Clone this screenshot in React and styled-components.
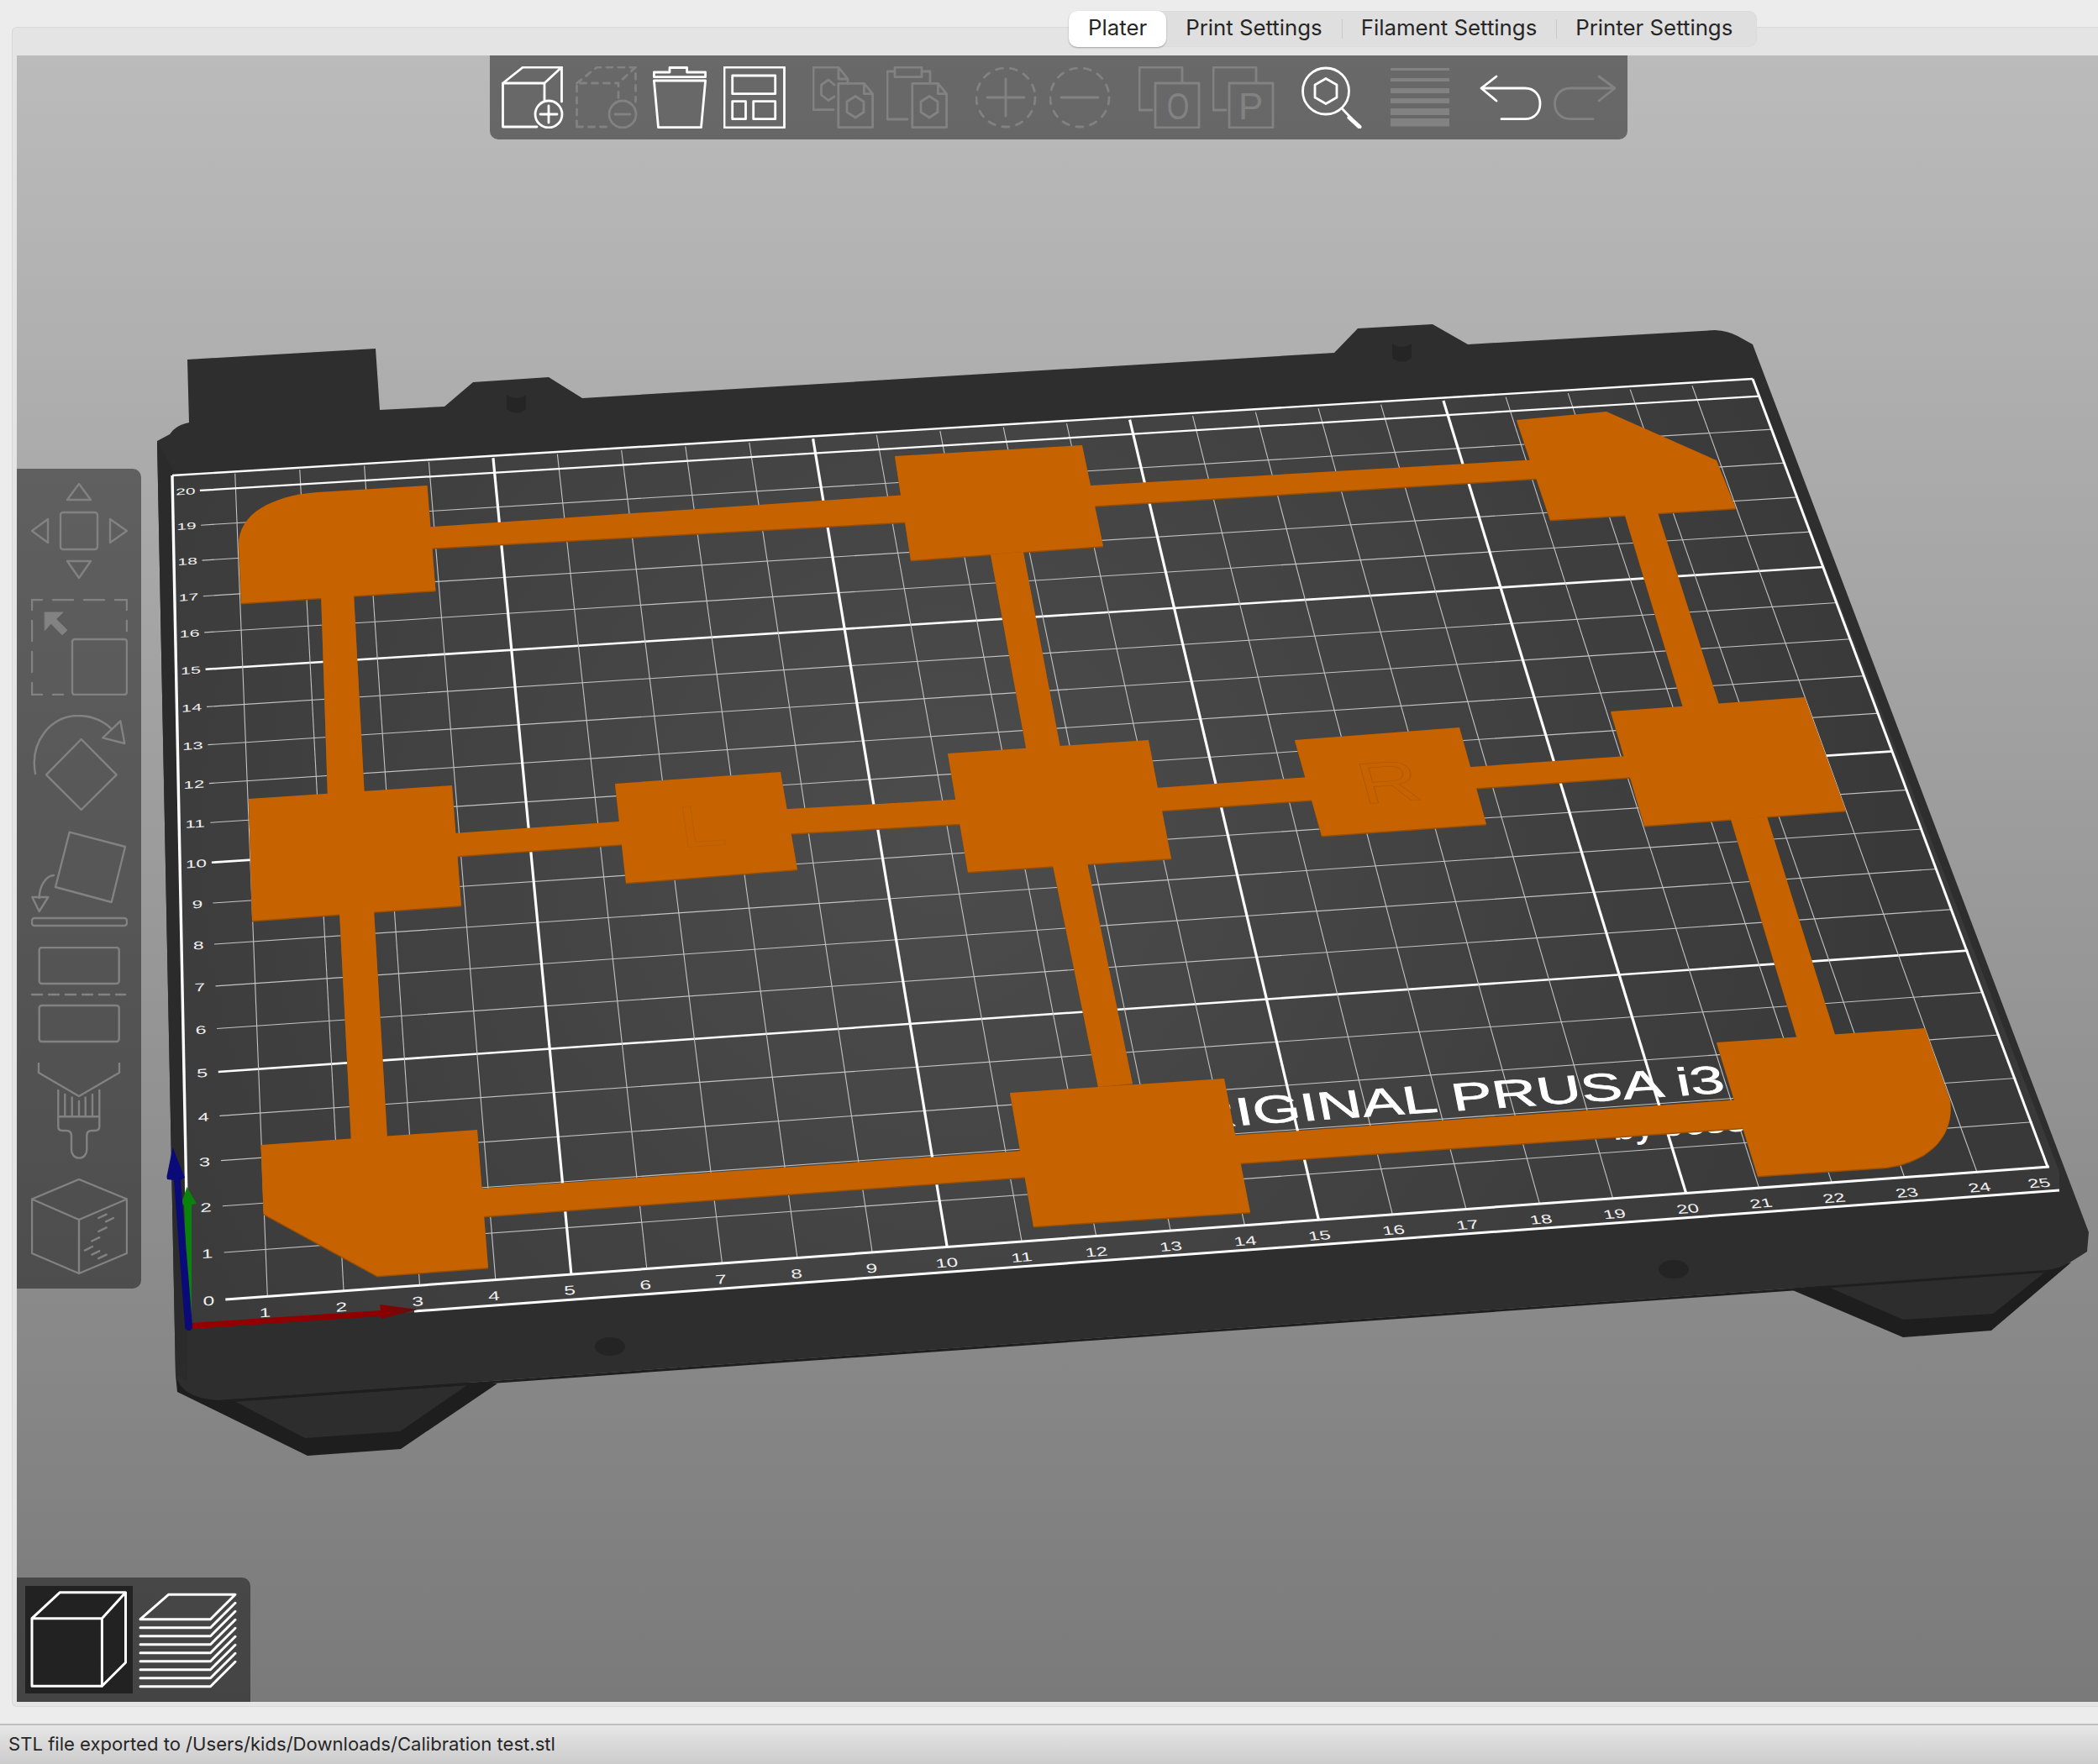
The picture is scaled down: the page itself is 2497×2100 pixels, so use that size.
import React from 'react';
import styled, { createGlobalStyle } from 'styled-components';

const GlobalStyle = createGlobalStyle`
    html, body {
        margin: 0;
        padding: 0;
        background: #ececec;
    }
    body {
        font-family: 'Inter', 'Liberation Sans', sans-serif;
    }
`;

const Window = styled.div`
    width: 2497px;
    height: 2100px;
    display: flex;
    flex-direction: column;
    position: relative;
    overflow: hidden;
    background: #ececec;
`;

const Notebook = styled.div`
    margin: 32px 0 0 14px;
    height: 2000px;
    box-sizing: border-box;
    padding: 33px 0 6px 5px;
    background: #e4e4e4;
    border: 1px solid #d9d9d9;
    border-right: 0;
    border-radius: 6px 0 0 6px;
`;

const Tabs = styled.div`
    position: absolute;
    top: 13px;
    left: 1272px;
    width: 819px;
    height: 43px;
    display: flex;
    align-items: center;
    border-radius: 10px;
    background: #dfdfdf;
    box-shadow: inset 0 0 0 1px #dbdbdb;
`;

const Tab = styled.div`
    height: 100%;
    box-sizing: border-box;
    display: flex;
    align-items: center;
    padding: 0 23px 4px;
    font-size: 25.8px;
    color: #262626;
    position: relative;
    ${p => p.$active && `
        background: #fff;
        border-radius: 10px;
        box-shadow: 0 1px 2px rgba(0,0,0,.3);
    `}
    ${p => p.$sep && `
        &::before {
            content: '';
            position: absolute;
            left: 0;
            top: 10px;
            bottom: 10px;
            width: 1px;
            background: #c9c9c9;
        }
    `}
`;

const Viewport = styled.div`
    position: relative;
    width: 2478px;
    height: 1960px;
    overflow: hidden;
    background: linear-gradient(#bbbbbb, #7a7a7a);
`;

const Scene = styled.svg`
    display: block;
    width: 100%;
    height: 100%;
`;

const Toolbar = styled.div`
    position: absolute;
    top: 0;
    left: 563px;
    width: 1354px;
    height: 100px;
    box-sizing: border-box;
    padding: 13px 14px;
    display: flex;
    gap: 32px;
    background: rgba(0,0,0,.44);
    border-radius: 0 0 10px 10px;
`;

const ToolGroup = styled.div`
    display: flex;
    gap: 14px;
`;

const Icon = styled.svg`
    display: block;
    flex: none;
    width: ${p => p.$size || 74}px;
    height: ${p => p.$size || 74}px;
    fill: none;
    color: ${p => (p.$off ? '#828282' : '#fff')};
    stroke: currentColor;
    stroke-width: ${p => p.$weight || 2.8};
    stroke-linejoin: round;
    stroke-linecap: round;
`;

const IconLetter = styled.text`
    font-family: 'Liberation Sans', sans-serif;
    font-size: 44px;
    fill: currentColor;
    stroke: none;
`;

const SidePanel = styled.div`
    position: absolute;
    left: 0;
    top: 492px;
    width: 148px;
    height: 976px;
    box-sizing: border-box;
    padding: 17px;
    display: flex;
    flex-direction: column;
    gap: 23px;
    background: rgba(0,0,0,.44);
    border-radius: 0 10px 10px 0;
`;

const ViewPanel = styled.div`
    position: absolute;
    left: 0;
    bottom: 0;
    width: 278px;
    height: 148px;
    box-sizing: border-box;
    padding: 10px;
    display: flex;
    gap: 1px;
    background: rgba(0,0,0,.44);
    border-radius: 0 10px 0 0;
`;

const ViewButton = styled.div`
    width: 128px;
    height: 128px;
    background: ${p => (p.$active ? '#222222' : 'transparent')};
`;

const StatusBar = styled.div`
    margin-top: 20px;
    height: 48px;
    box-sizing: border-box;
    padding: 0 0 2px 10px;
    display: flex;
    align-items: center;
    border-top: 2px solid #c0bfc0;
    background: linear-gradient(#e7e6e7, #cdcccd);
    font-size: 22.1px;
    color: #262626;
`;

// bed grid (column i, row j) to screen pixels
const A = [226.4, 1550], B = [2438, 1389], C = [2093, 471.6], D = [202, 586];
const dx1 = B[0] - C[0], dx2 = D[0] - C[0], sx = A[0] - B[0] + C[0] - D[0];
const dy1 = B[1] - C[1], dy2 = D[1] - C[1], sy = A[1] - B[1] + C[1] - D[1];
const den = dx1 * dy2 - dx2 * dy1;
const g = (sx * dy2 - dx2 * sy) / den;
const h = (dx1 * sy - sx * dy1) / den;

const project = (i, j) => {
    const u = i / 25, v = j / 20;
    const w = g * u + h * v + 1;
    return [
        ((B[0] - A[0] + g * B[0]) * u + (D[0] - A[0] + h * D[0]) * v + A[0]) / w,
        ((B[1] - A[1] + g * B[1]) * u + (D[1] - A[1] + h * D[1]) * v + A[1]) / w,
    ];
};

const gridMatrix = (i, j, size) => {
    const p = project(i, j), px = project(i + .01, j), py = project(i, j + .01);
    const k = size / 100 / .01;
    return `matrix(${(px[0] - p[0]) * k} ${(px[1] - p[1]) * k} ${(p[0] - py[0]) * k} ${(p[1] - py[1]) * k} ${p[0]} ${p[1]})`;
};

const range = n => Array.from({ length: n }, (_, k) => k);

const PARTS = [
    'M500 628L1080 589L1085 621L504 653Z',
    'M1280 579L1830 547L1838 569L1289 603Z',
    'M381 705L420 705L433 950L389 950Z',
    'M525 993L750 977L756 1004L530 1020Z',
    'M920 964L1150 951L1155 980L928 993Z',
    'M1178 660L1217 657L1261 890L1221 895Z',
    'M1360 939L1572 924L1579 951L1367 966Z',
    'M1735 914L1950 899L1958 924L1743 939Z',
    'M1932 610L1971 607L2046 842L2003 845Z',
    'M1252 1030L1293 1027L1347 1290L1306 1294Z',
    'M2059 975L2102 972L2185 1238L2140 1243Z',
    'M403 1085L444 1082L460 1356L417 1359Z',
    'M558 1416L1230 1369L1235 1400L561 1449Z',
    'M1462 1352L2085 1308L2097 1341L1470 1385Z',
    // corner and junction pads
    'M507.5 578L517.5 703L286 718L283 648C283 612 322 590 377 586Z',
    'M1064 543L1287 530L1312 650L1083 667Z',
    'M1804 500L1911 490L2042 548L2065 605L1844 619Z',
    'M295 951L537 935L548 1078L299 1096Z',
    'M731 933L928 919L948 1035L744 1051Z',
    'M1127 897L1366 881L1393 1022L1151 1038Z',
    'M1540 881L1736 866L1768 981L1572 995Z',
    'M1916 847L2147 830L2196 965L1956 983Z',
    'M1201 1301L1456 1284L1487 1443L1229 1460Z',
    'M2042 1241L2290 1224L2320 1310C2326 1355 2290 1385 2240 1390L2091 1400Z',
    'M309.5 1363L567 1345L580 1509L448 1519L312.6 1445Z',
];

const BED = 'M186 525L201 517Q208 506 224 503L222 428L446 415L451 488L528 484L562 455L652 449L692 474L1587 420L1615 391L1704 386L1746 410L2040 393Q2056 394 2067 400L2085 410L2485 1467L2483 1490L2464 1502Q2450 1510 2436 1512L260 1667Q215 1665 208 1637Z';

const PIN = (x, y) => `M${x} ${y}Q${x + 11.5} ${y + 8} ${x + 23} ${y}V${y + 17}Q${x + 11.5} ${y + 26} ${x} ${y + 17}Z`;

const Bed = () => (
    <Scene viewBox="19 66 2478 1960">
        <defs>
            <radialGradient id="surface" gradientUnits="userSpaceOnUse" cx="1120" cy="1000" r="1150">
                <stop offset="0" stopColor="#4c4c4c" />
                <stop offset="1" stopColor="#393939" />
            </radialGradient>
            <linearGradient id="redAxis" gradientUnits="userSpaceOnUse" x1="225" y1="1580" x2="496" y2="1559">
                <stop offset="0" stopColor="#960000" />
                <stop offset=".85" stopColor="#8a0000" />
                <stop offset="1" stopColor="#5c1010" />
            </linearGradient>
        </defs>

        {/* feet below the bed */}
        <path d="M208 1637L210 1657L365 1733L476 1725L591 1647Z" fill="#1e1e1e" />
        <path d="M278 1668L362 1712L475 1704L555 1649Z" fill="#2d2d2d" />
        <path d="M2128 1534L2264 1592L2369 1584L2464 1503Z" fill="#1e1e1e" />
        <path d="M2170 1530L2264 1571L2371 1564L2436 1512Z" fill="#2d2d2d" />

        {/* bed */}
        <path d={BED} fill="#2e2e2e" />
        <path d="M260 1667L2436 1512L2433 1515L262 1670Z" fill="#1f1f1f" />
        <path d="M186 525L208 1637L222 1644L205 560Z" fill="#2b2b2b" />
        <path d={PIN(602, 470)} fill="#252525" />
        <path d={PIN(1656, 409)} fill="#252525" />
        <ellipse cx="725" cy="1603" rx="18" ry="11" fill="#242424" />
        <ellipse cx="1991" cy="1511" rx="18" ry="11" fill="#242424" />

        {/* print surface */}
        <path d="M204 566L2085 451L2450 1395L2450 1417L224 1582Z" fill="url(#surface)" />

        {/* grid */}
        {range(19).map(k => {
            const j = k + 1;
            const a = project(.45, j), b = project(25, j);
            return <line key={j} x1={a[0]} y1={a[1]} x2={b[0]} y2={b[1]} stroke={j % 5 === 0 ? '#fff' : '#c4c4c4'} strokeWidth={j % 5 === 0 ? 2.6 : 1.1} />;
        })}
        {range(24).map(k => {
            const i = k + 1;
            const a = project(i, 0), b = project(i, 20.43);
            return <line key={i} x1={a[0]} y1={a[1]} x2={b[0]} y2={b[1]} stroke={i % 5 === 0 ? '#fff' : '#c4c4c4'} strokeWidth={i % 5 === 0 ? 3.2 : 1.1} />;
        })}
        {(() => {
            const a = project(.45, 0), b = project(25, 0), c = project(.45, 20), d = project(25, 20);
            return (
                <g stroke="#fff" strokeWidth="3">
                    <line x1={a[0]} y1={a[1]} x2={b[0]} y2={b[1]} />
                    <line x1={c[0]} y1={c[1]} x2={d[0]} y2={d[1]} strokeWidth="2.2" />
                    <line x1="204" y1="566" x2="2085" y2="451" strokeWidth="2.4" />
                    <line x1="204" y1="566" x2="224" y2="1582" strokeWidth="3.4" />
                    <line x1="2085" y1="451" x2="2436" y2="1389" />
                    <line x1="492" y1="1561" x2="2450" y2="1417" />
                </g>
            );
        })()}

        {/* labels */}
        <g fill="#f0f0f0" fontFamily="'Liberation Sans', sans-serif" fontSize="100" textAnchor="middle">
            {range(21).map(j => <text key={j} transform={gridMatrix(.23, j, .27)} y="36">{j}</text>)}
            {range(25).map(k => <text key={k} transform={gridMatrix(k === 24 ? 24.78 : k + .96, -.33, .27)} y="36">{k + 1}</text>)}
        </g>
        <g fill="#fff" stroke="#fff" fontFamily="'Liberation Sans', sans-serif" fontSize="100">
            <text transform="matrix(.73 -.049 .09 .46 1363 1347)" strokeWidth="1.5">ORIGINAL PRUSA i3</text>
            <text transform="matrix(.46 -.031 .07 .38 1920 1356.5)" strokeWidth="2">by Josef Prusa</text>
        </g>

        {/* model */}
        <g fill="#9a4e00" transform="translate(0 1.5)">
            {PARTS.map(d => <path key={d} d={d} />)}
        </g>
        <g fill="#c66300">
            {PARTS.map(d => <path key={d} d={d} />)}
        </g>
        <g fill="none" strokeWidth="1" fontFamily="'Liberation Sans', sans-serif" fontSize="100">
            <text transform="matrix(1 -.07 .19 .68 1622 957)" stroke="#ad5700">R</text>
            <text transform="matrix(1 -.07 .1 .7 810 1009)" stroke="#b85e00">L</text>
        </g>

        {/* axes */}
        <path d="M215 1432L221.5 1413L233 1433L227 1434L227 1577L224 1577L218 1435Z" fill="#0b820b" />
        <path d="M225 1575L452 1560L451 1553L496 1559L453 1570L452 1567L227 1582Z" fill="url(#redAxis)" />
        <path d="M204.5 1366L219 1402L214 1405L228 1578Q228 1584 224 1584Q219 1584 219 1578L206 1405L198 1404Q197 1401 198 1398Z" fill="#0a0a78" />
    </Scene>
);

const IconButton = ({ off, size, weight, children }) => (
    <Icon viewBox={`0 0 ${size || 74} ${size || 74}`} $off={off} $size={size} $weight={weight}>{children}</Icon>
);

const CUBE = 'M1.5 72V20H51V41M1.5 20L25.5 1H71.5V42M71.5 1L51 20M1.5 72H42';
const DOC = 'M30.8 20.3H61.4L71.6 32.7V72.7H30.8ZM61.4 20.3V32.7H71.6';
const HEX = 'M51 35.5L61 42V54.5L51 61L41 54.5V42Z';

const TopTools = () => (
    <Toolbar>
        <ToolGroup>
            <IconButton>
                <path d={CUBE} />
                <circle cx="56" cy="57" r="16" />
                <path d="M56 47V67M46 57H66" />
            </IconButton>
            <IconButton off>
                <path d={CUBE} strokeDasharray="7 7" />
                <circle cx="56" cy="57" r="16" />
                <path d="M47 57H65" />
            </IconButton>
            <IconButton>
                <path d="M5.4 7H24V1.5H44.6V7H66.6V12.7H5.4ZM5.4 17H66.6L61.5 72.7H10.5Z" />
            </IconButton>
            <IconButton>
                <path d="M1 1H72.5V73H1ZM10.7 11H61.7V32.7H10.7ZM10.7 41.7H26.5V62.7H10.7ZM35.7 41.7H61.7V62.7H35.7Z" />
            </IconButton>
        </ToolGroup>
        <ToolGroup>
            <IconButton off>
                <path d="M25 51.7H1V1H31L42 15V20M31 1V15H42M26 22L19 16L10.5 22V34L19 40.5L26 36" />
                <path d={DOC} />
                <path d={HEX} />
            </IconButton>
            <IconButton off>
                <path d="M25 63H1V6H10M42 6H52V20M10 1H42V12.7H10Z" />
                <path d={DOC} />
                <path d={HEX} />
            </IconButton>
        </ToolGroup>
        <ToolGroup>
            <IconButton off>
                <circle cx="36" cy="37" r="35" strokeDasharray="8 9" />
                <path d="M36 15V59M14 37H58" />
            </IconButton>
            <IconButton off>
                <circle cx="36" cy="37" r="35" strokeDasharray="8 9" />
                <path d="M14 37H58" />
            </IconButton>
        </ToolGroup>
        <ToolGroup>
            <IconButton off>
                <path d="M16 52H1V1H52V20M20 20H72V73H20Z" />
                <IconLetter x="31" y="63" transform="translate(9.5 0) scale(.78 1)">O</IconLetter>
            </IconButton>
            <IconButton off>
                <path d="M16 52H1V1H52V20M20 20H72V73H20Z" />
                <IconLetter x="31" y="63">P</IconLetter>
            </IconButton>
        </ToolGroup>
        <ToolGroup>
            <IconButton>
                <circle cx="29" cy="29.5" r="27.5" />
                <path d="M29 14.5L42 22V37L29 44.5L16 37V22Z" />
                <path d="M49 51L69 72" />
                <path d="M57 61L69 72" strokeWidth="5" />
            </IconButton>
        </ToolGroup>
        <ToolGroup>
            <IconButton off>
                <g fill="#828282" stroke="none">
                    <rect x="0" y="2" width="70" height="3" />
                    <rect x="0" y="14" width="70" height="4" />
                    <rect x="0" y="26" width="70" height="6" />
                    <rect x="0" y="38" width="70" height="6" />
                    <rect x="0" y="50" width="70" height="8" />
                    <rect x="0" y="62" width="70" height="9.500" />
                </g>
            </IconButton>
        </ToolGroup>
        <ToolGroup>
            <IconButton>
                <path d="M20 12L2 26L20 41M2 26H54C66 26 72 35 72 44.500C72 54 66 62.700 54 62.700H26" />
            </IconButton>
            <IconButton off>
                <path d="M54 12L73 26L54 41M73 26H20C8 26 1.500 35 1.500 44.500C1.500 54 8 62.700 20 62.700H47" />
            </IconButton>
        </ToolGroup>
    </Toolbar>
);

const SideTools = () => (
    <SidePanel>
        <IconButton off size={115} weight={2.4}>
            <path d="M57 1L71 20H43ZM1 57L20 43V71ZM114 57L94 43V71ZM57 113L43 93H71Z" />
            <rect x="35" y="35" width="44" height="44" rx="3" />
        </IconButton>
        <IconButton off size={115} weight={2.4}>
            <path d="M1 13V1H13M26 1H50M63 1H87M100 1H114V13M114 26V38M1 26V50M1 63V87M1 100V114H13M26 114H38" />
            <rect x="49" y="48" width="65" height="66" rx="3" />
            <path d="M16.500 16H38L29.700 24L43 37.300L37 42.700L23.700 29.300L16.500 37.300Z" fill="#828282" strokeWidth="1" />
        </IconButton>
        <IconButton off size={115} weight={2.4}>
            <path d="M5 70C-2 32 24 1 55 1C72 1 86 7 96 17" />
            <path d="M106.300 7.300L111.300 34L85.300 27.300Z" />
            <path d="M59.700 29L101.700 71.300L59.700 113L18 71.300Z" />
        </IconButton>
        <IconButton off size={115} weight={2.4}>
            <path d="M45.700 1.700L112 19L95.700 85L29 67Z" />
            <path d="M27 53C17 54 10 66 9.700 80" />
            <path d="M1.300 79H20.300L9.700 96Z" />
            <rect x="1" y="104" width="113" height="9" rx="3" />
        </IconButton>
        <IconButton off size={115} weight={2.4}>
            <rect x="9.700" y="1" width="95" height="43" rx="3" />
            <path d="M1 57H112" strokeDasharray="12 8" />
            <rect x="9.700" y="70" width="95" height="43" rx="3" />
        </IconButton>
        <IconButton off size={115} weight={2.4}>
            <path d="M9 1V12L57 40L105 12V1" />
            <path d="M32.300 33V76Q32.300 81 37 81H42Q48 81 48 87V104A9 9.500 0 0 0 66.300 104V87Q66.300 81 72 81H76Q81.300 81 81.300 76V33M32.300 64.300H81.300" />
            <path d="M40.300 38V64M48.700 41.500V64M57 46V64M64.700 41.500V64M73 38V64" />
        </IconButton>
        <IconButton off size={115} weight={2.4}>
            <path d="M57 1L114 24.500L57 49L1 24.500ZM1 24.500V89L57 113L114 89V24.500M57 49V113" />
            <path d="M80.300 47L89.700 42.700M89 51.300L98 47M80.300 63L89.700 58.400M72.300 74.500L81.300 70.200M64 85.600L73 81M72.300 90.600L81.300 86.300M80.300 95.200L89.700 90.600" />
        </IconButton>
    </SidePanel>
);

const ViewTools = () => (
    <ViewPanel>
        <ViewButton $active>
            <IconButton size={128} weight={3}>
                <path d="M8 38.700H91.400V119.300H8ZM8 38.700L41.400 7.700H119.500L91.400 38.700M119.500 7.700V91.300L91.400 119.300" />
            </IconButton>
        </ViewButton>
        <ViewButton>
            <IconButton size={128} weight={3}>
                <path d="M8 39.700L41.500 10.300H121L91.500 39.700Z" />
                {range(8).map(k => (
                    <path key={k} d={`M8 ${49.7 + k * 10}H91.500L121 ${20.3 + k * 10}`} />
                ))}
            </IconButton>
        </ViewButton>
    </ViewPanel>
);

export default function App() {
    return (
        <Window>
            <GlobalStyle />
            <Notebook>
                <Viewport>
                    <Bed />
                    <TopTools />
                    <SideTools />
                    <ViewTools />
                </Viewport>
            </Notebook>
            <Tabs>
                <Tab $active>Plater</Tab>
                <Tab>Print Settings</Tab>
                <Tab $sep>Filament Settings</Tab>
                <Tab $sep>Printer Settings</Tab>
            </Tabs>
            <StatusBar>STL file exported to /Users/kids/Downloads/Calibration test.stl</StatusBar>
        </Window>
    );
}
